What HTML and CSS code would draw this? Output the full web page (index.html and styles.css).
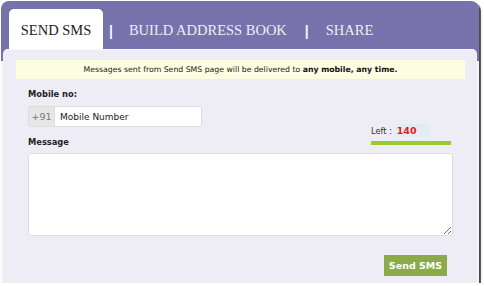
FILE: index.html
```html
<!DOCTYPE html>
<html>
<head>
    <title>Send SMS</title>
    <link rel="stylesheet" href="styles.css">
</head>
<body>
    <div class="frame">
        <div class="tabs">
            <a class="tab active">SEND SMS</a>
            <span class="sep">|</span>
            <a class="tab">BUILD ADDRESS BOOK</a>
            <span class="sep sep2">|</span>
            <a class="tab">SHARE</a>
        </div>
        <div class="panel">
            <div class="notice">Messages sent from Send SMS page will be delivered to <b>any mobile, any time.</b></div>

            <div class="row">
                <div class="mobile">
                    <label class="lbl">Mobile no:</label>
                    <div class="input-group">
                        <span class="prefix">+91</span>
                        <input type="text" class="phone" placeholder="Mobile Number">
                    </div>
                    <label class="lbl msg-lbl">Message</label>
                </div>
                <div class="counter">
                    <div class="left">Left : <span class="count">140</span></div>
                    <div class="bar"></div>
                </div>
            </div>

            <textarea class="message"></textarea>

            <div class="actions">
                <button class="send">Send SMS</button>
            </div>
        </div>
    </div>
</body>
</html>
```

FILE: styles.css
```css
body { margin: 0; background: #fff; font-family: "DejaVu Sans", Verdana, sans-serif; }
.frame { width: 478px; margin: 1px 0 0 1px; height: 282px; background: linear-gradient(#7772ab 60px, #f4f4f9 60px); border-radius: 8px 8px 0 0; box-shadow: 2px 2px 1px #4a4a4a; display: flex; flex-direction: column; }
.tabs { display: flex; align-items: flex-end; height: 48px; padding-left: 8px; flex-shrink: 0; }
.tab { font-family: "Liberation Serif", "Times New Roman", serif; font-size: 14.5px; color: #eeedf6; height: 40px; line-height: 42px; }
.tab.active { background: #fff; color: #222; width: 94px; text-align: center; border-radius: 5px 5px 0 0; }
.sep { font-family: "Liberation Sans", Arial, sans-serif; font-weight: bold; color: #f4f4fa; font-size: 14px; height: 40px; line-height: 44px; margin: 0 16px 0 6px; }
.sep2 { margin: 0 17px 0 18px; }
.panel { flex: 1; background: #eeedf5; margin: 0 2px 0 2px; border-radius: 5px 5px 0 0; padding: 10px 12px 0 13px; border-top: 1px solid #f8f8fb; }
.notice { background: #fdfde1; height: 19px; line-height: 19px; text-align: center; font-size: 7.75px; color: #222; }
.notice b { color: #111; }
.row { display: flex; justify-content: space-between; padding: 0 12px 0 12px; }
.lbl { display: block; font-size: 8.3px; font-weight: bold; color: #222; }
.mobile .lbl:first-child { margin-top: 10px; }
.input-group { display: flex; margin-top: 7px; width: 172px; height: 19px; border: 1px solid #dcdce4; border-radius: 2px; background: #fff; }
.prefix { width: 25px; background: #e6e6e6; color: #777; font-size: 9.5px; line-height: 19px; text-align: center; border-right: 1px solid #dcdce4; }
.phone { border: none; outline: none; flex: 1; padding: 0 5px; font-family: inherit; font-size: 9px; background: transparent; }
.phone::placeholder { color: #222; }
.msg-lbl { margin-top: 10px; }
.counter { margin-top: 45px; width: 80px; margin-right: 2px; }
.left { font-size: 8.3px; color: #333; height: 13px; line-height: 13px; }
.count { display: inline-block; background: #e3ecf3; color: #d22; font-weight: bold; font-size: 9.5px; width: 33px; padding-left: 2px; }
.bar { height: 4px; background: #9acb2b; margin-top: 4px; }
.message { display: block; box-sizing: border-box; margin: 6px 0 0 12px; width: 425px; height: 83px; border: 1px solid #dcdce2; border-radius: 3px; background: #fff; resize: both; }
.actions { display: flex; justify-content: flex-end; padding-right: 18px; margin-top: 19px; }
.send { background: #8aab48; color: #fff; border: none; font-family: inherit; font-weight: bold; font-size: 9.5px; height: 21px; width: 63px; padding: 0; }
```
